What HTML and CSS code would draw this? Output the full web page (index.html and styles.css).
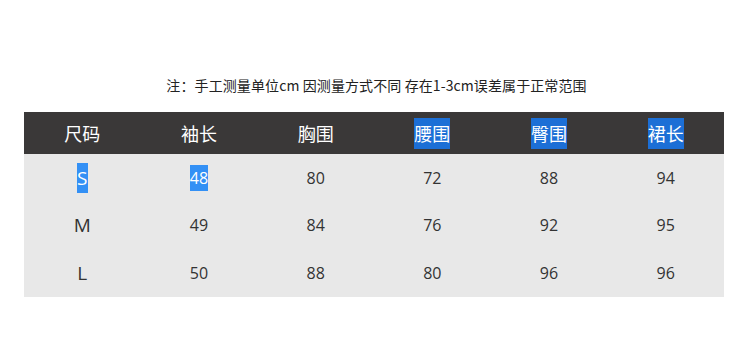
FILE: index.html
```html
<!DOCTYPE html>
<html lang="zh-CN">
<head>
<meta charset="utf-8">
<link rel="stylesheet" href="styles.css">
</head>
<body>
<div class="page">
  <p class="note">注：手工测量单位cm 因测量方式不同 存在1-3cm误差属于正常范围</p>
  <table class="size-table">
    <thead>
      <tr>
        <th>尺码</th>
        <th>袖长</th>
        <th>胸围</th>
        <th><span class="sel-dark">腰围</span></th>
        <th><span class="sel-dark">臀围</span></th>
        <th><span class="sel-dark">裙长</span></th>
      </tr>
    </thead>
    <tbody>
      <tr><td class="sz"><span class="sel">S</span></td><td><span class="sel">48</span></td><td>80</td><td>72</td><td>88</td><td>94</td></tr>
      <tr><td class="sz">M</td><td>49</td><td>84</td><td>76</td><td>92</td><td>95</td></tr>
      <tr><td class="sz">L</td><td>50</td><td>88</td><td>80</td><td>96</td><td>96</td></tr>
    </tbody>
  </table>
</div>
</body>
</html>
```
FILE: styles.css
```css
html, body {
  margin: 0;
  padding: 0;
  background: #ffffff;
}
.page {
  width: 753px;
  padding-top: 76px;
  font-family: "Open Sans", "Noto Sans CJK SC", sans-serif;
}
.note {
  margin: 0 0 18px 0;
  text-align: center;
  font-family: "Noto Sans CJK SC", sans-serif;
  font-size: 14px;
  line-height: 18px;
  color: #222222;
  letter-spacing: 0.1px;
}
.size-table {
  margin-left: 24px;
  width: 700px;
  border-collapse: collapse;
  table-layout: fixed;
}
.size-table th {
  background: #3a3838;
  color: #ffffff;
  font-weight: normal;
  font-size: 18px;
  height: 42px;
  padding: 0;
  text-align: center;
  font-family: "Noto Sans CJK SC", sans-serif;
}
.size-table td {
  background: #e8e8e8;
  color: #333333;
  font-size: 16px;
  height: 47.67px;
  padding: 0;
  text-align: center;
}
.size-table td.sz {
  font-size: 19px;
}
.sel-dark {
  background: #1c6fd6;
  padding: 2px 0 3px;
}
.sel {
  background: #3390f5;
  color: #ffffff;
  padding: 2px 0 2px;
}
```
